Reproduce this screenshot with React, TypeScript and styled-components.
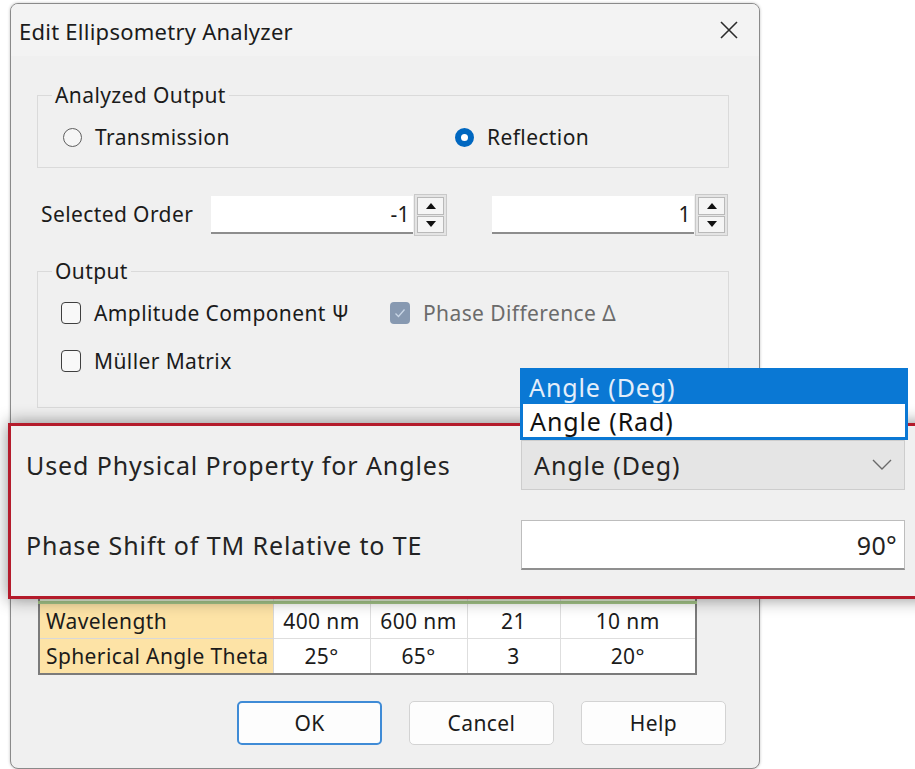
import React from "react";
import styled, { createGlobalStyle } from "styled-components";

const GlobalStyle = createGlobalStyle`
  html, body { margin: 0; padding: 0; background: #ffffff; }
  body { font-family: "Noto Sans", "Open Sans", sans-serif; color: #1b1b1b; }
  * { box-sizing: border-box; }
`;

const Stage = styled.div`
  position: relative;
  width: 915px;
  height: 769px;
  overflow: hidden;
  background: #ffffff;
  padding: 3px 0 0 10px;
`;

const Dialog = styled.div`
  width: 750px;
  height: 766px;
  display: flex;
  flex-direction: column;
  background: #f0f0f0;
  border: 1px solid #8a8a8a;
  border-radius: 8px;
  box-shadow: 0 0 3px rgba(0, 0, 0, 0.25);
  overflow: hidden;
`;

const TitleBar = styled.div`
  height: 52px;
  flex: none;
  display: flex;
  align-items: center;
  justify-content: space-between;
  padding: 2px 20px 0 8px;
  background: #f3f3f3;
  font-size: 22px;
  letter-spacing: 0.25px;
`;

const CloseButton = styled.svg`
  width: 20px;
  height: 20px;
  margin-top: -3px;
`;

const Body = styled.div`
  flex: 1;
  display: flex;
  flex-direction: column;
  padding: 0 30px 0 26px;
  font-size: 21px;
  letter-spacing: 0.4px;
`;

const Group = styled.fieldset<{ $top: number }>`
  margin: ${(p) => p.$top}px 0 0 0;
  padding: 0;
  border: 1px solid #dadada;
  min-width: 0;
`;

const Legend = styled.legend`
  margin-left: 14px;
  padding: 0 3px;
  line-height: 22px;
`;

const RadioRow = styled.div`
  display: grid;
  grid-template-columns: 392px 1fr;
  padding: 19px 0 18px 25px;
`;

const OptionItem = styled.label<{ $muted?: boolean }>`
  display: flex;
  align-items: center;
  gap: 13px;
  height: 24px;
  color: ${(p) => (p.$muted ? "#6b6b6b" : "#1b1b1b")};
`;

const RadioDot = styled.span<{ $on?: boolean }>`
  width: 19px;
  height: 19px;
  border-radius: 50%;
  flex: none;
  background: ${(p) => (p.$on ? "#ffffff" : "#f6f6f6")};
  border: ${(p) => (p.$on ? "6px solid #0067c0" : "1.5px solid #5f5f5f")};
`;

const CheckGrid = styled.div`
  display: grid;
  grid-template-columns: 329px 1fr;
  row-gap: 24px;
  padding: 19px 0 34px 23px;
`;

const CheckBox = styled.span<{ $on?: boolean }>`
  width: 20px;
  height: 22px;
  flex: none;
  border-radius: 4px;
  display: flex;
  align-items: center;
  justify-content: center;
  background: ${(p) => (p.$on ? "#8799b1" : "#f8f8f8")};
  border: ${(p) => (p.$on ? "none" : "1.5px solid #3f3f3f")};
`;

const OrderRow = styled.div`
  display: flex;
  align-items: center;
  margin-top: 28px;
  height: 38px;
`;

const OrderLabel = styled.span`
  width: 174px;
  padding-left: 4px;
  margin-top: -3px;
`;

const SpinField = styled.div<{ $gap?: number }>`
  display: flex;
  align-items: center;
  margin-left: ${(p) => p.$gap ?? 0}px;
`;

const NumberBox = styled.div`
  width: 202px;
  height: 38px;
  background: #ffffff;
  border-bottom: 2px solid #8d8d8d;
  display: flex;
  align-items: center;
  justify-content: flex-end;
  padding-right: 3px;
`;

const Spinner = styled.div`
  width: 33px;
  height: 42px;
  margin-left: 1px;
  padding: 2px;
  background: #e4e4e4;
  border: 1px solid #c9c9c9;
  display: grid;
  grid-template-rows: 1fr 1fr;
  gap: 1px;
`;

const SpinHalf = styled.span<{ $down?: boolean }>`
  display: flex;
  align-items: center;
  justify-content: center;
  background: #f5f5f5;
  border: 1px solid #b9b9b9;
  &::before {
    content: "";
    border-left: 5px solid transparent;
    border-right: 5px solid transparent;
    ${(p) => (p.$down ? "border-top: 6px solid #111;" : "border-bottom: 6px solid #111;")}
  }
`;

/* The dialog's own angle controls, lying under the magnified callout */
const PropertyRows = styled.div`
  display: grid;
  grid-template-columns: 372px 1fr;
  grid-template-rows: 38px 38px;
  row-gap: 24px;
  margin-top: 22px;
`;

const SmallSelect = styled.div`
  grid-column: 2;
  background: #e5e5e5;
  border: 1px solid #cccccc;
`;

const SmallInput = styled.div`
  grid-column: 2;
  background: #ffffff;
  border-bottom: 2px solid #8d8d8d;
`;

const Grid = styled.table`
  margin: 33px 0 0 1px;
  width: 659px;
  border-collapse: collapse;
  table-layout: fixed;
  border: 2px solid #7b7b7b;
  background: #ffffff;
`;

const HeadCell = styled.th`
  height: 38px;
  font-weight: normal;
  background: #e4efd6;
  border: 1px solid #d2d2d2;
  border-bottom: 3px solid #a6c78a;
`;

const NameCell = styled.td`
  height: 36px;
  padding: 0 0 0 6px;
  background: #fde3a6;
  border: 1px solid #d8d8d8;
  text-align: left;
`;

const ValueCell = styled.td`
  height: 36px;
  padding: 0;
  border: 1px solid #dedede;
  text-align: center;
`;

const ButtonRow = styled.div`
  display: flex;
  justify-content: flex-end;
  gap: 27px;
  margin: 26px 3px 0 0;
`;

const DialogButton = styled.button<{ $primary?: boolean }>`
  width: 145px;
  height: 44px;
  font-family: inherit;
  font-size: 21px;
  letter-spacing: 0.4px;
  color: #1b1b1b;
  background: #fdfdfd;
  border-radius: 5px;
  border: ${(p) => (p.$primary ? "2px solid #3f8bd6" : "1px solid #d3d3d3")};
`;

/* Magnified callout of the angle settings, framed in red */
const Callout = styled.div`
  position: absolute;
  left: 8px;
  top: 423px;
  width: 925px;
  height: 176px;
  border: 3px solid #b41b2b;
  background: #f0f0f0;
  box-shadow: 0 0 16px rgba(0, 0, 0, 0.45);
  display: grid;
  grid-template-columns: 495px 384px;
  grid-template-rows: 50px 50px;
  row-gap: 30px;
  align-items: center;
  padding: 14px 0 0 15px;
  font-size: 25px;
  letter-spacing: 0.9px;
  color: #232323;
`;

const ComboWrap = styled.div`
  position: relative;
  height: 50px;
`;

const Combo = styled.div`
  height: 50px;
  background: #e5e5e5;
  border: 1px solid #cdcdcd;
  display: flex;
  align-items: center;
  justify-content: space-between;
  padding: 0 12px;
`;

const PopupList = styled.div`
  position: absolute;
  left: -1px;
  bottom: 100%;
  width: 388px;
  border: 2px solid #0a78d4;
  background: #ffffff;
`;

const PopupItem = styled.div<{ $active?: boolean }>`
  height: 34px;
  display: flex;
  align-items: center;
  padding-left: 7px;
  background: ${(p) => (p.$active ? "#0a78d4" : "#ffffff")};
  color: ${(p) => (p.$active ? "#e4eefa" : "#111111")};
  ${(p) => (p.$active ? "" : "border: 1px solid #0a78d4; border-top: none;")}
`;

const BigInput = styled.div`
  height: 50px;
  background: #ffffff;
  border: 1px solid #bdbdbd;
  border-bottom: 2px solid #8f8f8f;
  display: flex;
  align-items: center;
  justify-content: flex-end;
  padding-right: 7px;
  letter-spacing: 0.3px;
`;

const Chevron = () => (
  <svg width="20" height="12" viewBox="0 0 20 12">
    <path d="M1 1 L10 10 L19 1" fill="none" stroke="#6a6a6a" strokeWidth="1.4" />
  </svg>
);

const CheckMark = () => (
  <svg width="12" height="10" viewBox="0 0 12 10">
    <path d="M1.5 5.5 L4.5 8.5 L10.5 1.5" fill="none" stroke="#c9d6e6" strokeWidth="1.3" />
  </svg>
);

const rows = [
  { name: "Wavelength", from: "400 nm", to: "600 nm", steps: "21", size: "10 nm" },
  { name: "Spherical Angle Theta", from: "25°", to: "65°", steps: "3", size: "20°" },
];

export default function App() {
  return (
    <Stage>
      <GlobalStyle />
      <Dialog>
        <TitleBar>
          <span>Edit Ellipsometry Analyzer</span>
          <CloseButton viewBox="0 0 20 20">
            <path d="M2 2 L18 18 M18 2 L2 18" stroke="#2b2b2b" strokeWidth="1.6" />
          </CloseButton>
        </TitleBar>
        <Body>
          <Group $top={28}>
            <Legend>Analyzed Output</Legend>
            <RadioRow>
              <OptionItem>
                <RadioDot />
                Transmission
              </OptionItem>
              <OptionItem>
                <RadioDot $on />
                Reflection
              </OptionItem>
            </RadioRow>
          </Group>

          <OrderRow>
            <OrderLabel>Selected Order</OrderLabel>
            <SpinField>
              <NumberBox>-1</NumberBox>
              <Spinner>
                <SpinHalf />
                <SpinHalf $down />
              </Spinner>
            </SpinField>
            <SpinField $gap={45}>
              <NumberBox>1</NumberBox>
              <Spinner>
                <SpinHalf />
                <SpinHalf $down />
              </Spinner>
            </SpinField>
          </OrderRow>

          <Group $top={26}>
            <Legend>Output</Legend>
            <CheckGrid>
              <OptionItem>
                <CheckBox />
                Amplitude Component Ψ
              </OptionItem>
              <OptionItem $muted>
                <CheckBox $on>
                  <CheckMark />
                </CheckBox>
                Phase Difference Δ
              </OptionItem>
              <OptionItem>
                <CheckBox />
                Müller Matrix
              </OptionItem>
            </CheckGrid>
          </Group>

          <PropertyRows>
            <SmallSelect />
            <SmallInput />
          </PropertyRows>

          <Grid>
            <colgroup>
              <col style={{ width: 234 }} />
              <col style={{ width: 97 }} />
              <col style={{ width: 97 }} />
              <col style={{ width: 93 }} />
              <col />
            </colgroup>
            <thead>
              <tr>
                <HeadCell />
                <HeadCell />
                <HeadCell />
                <HeadCell />
                <HeadCell />
              </tr>
            </thead>
            <tbody>
              {rows.map((r) => (
                <tr key={r.name}>
                  <NameCell>{r.name}</NameCell>
                  <ValueCell>{r.from}</ValueCell>
                  <ValueCell>{r.to}</ValueCell>
                  <ValueCell>{r.steps}</ValueCell>
                  <ValueCell>{r.size}</ValueCell>
                </tr>
              ))}
            </tbody>
          </Grid>

          <ButtonRow>
            <DialogButton $primary>OK</DialogButton>
            <DialogButton>Cancel</DialogButton>
            <DialogButton>Help</DialogButton>
          </ButtonRow>
        </Body>
      </Dialog>

      <Callout>
        <span>Used Physical Property for Angles</span>
        <ComboWrap>
          <PopupList>
            <PopupItem $active>Angle (Deg)</PopupItem>
            <PopupItem>Angle (Rad)</PopupItem>
          </PopupList>
          <Combo>
            <span>Angle (Deg)</span>
            <Chevron />
          </Combo>
        </ComboWrap>
        <span>Phase Shift of TM Relative to TE</span>
        <BigInput>90°</BigInput>
      </Callout>
    </Stage>
  );
}
